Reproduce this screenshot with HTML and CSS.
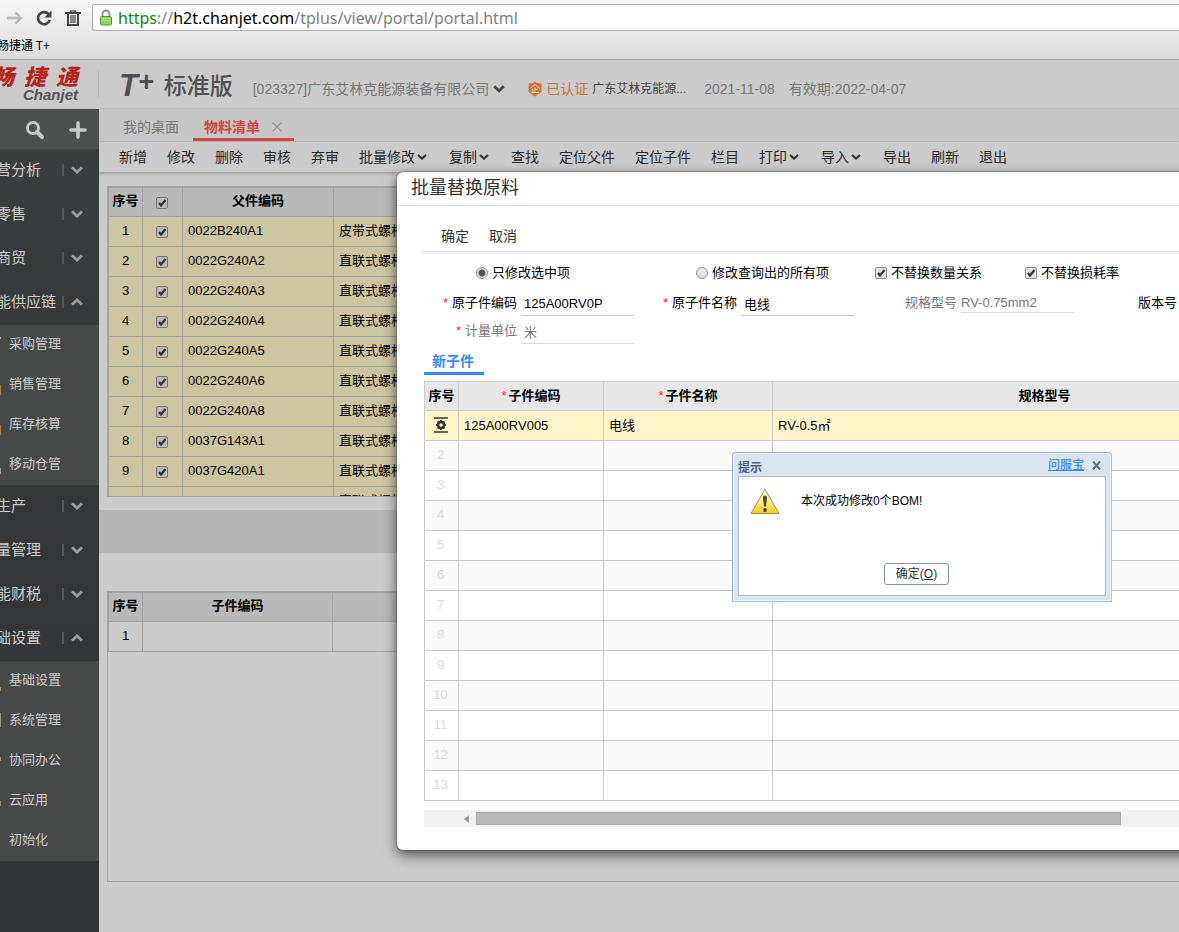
FILE: index.html
```
<!DOCTYPE html>
<html lang="zh-CN">
<head>
    <meta charset="utf-8">
    <title>畅捷通 T+</title>
    <link rel="stylesheet" href="styles.css">
</head>
<body>
    <!-- Browser bar -->
    <div class="browser">
        <div class="browser-row">
            <button class="nav-btn" type="button" aria-label="前进">
                <svg width="16" height="16" viewBox="0 0 16 16" fill="none" stroke="#b9b9b9" stroke-width="2.4"><path d="M0 8h14M8.500 2.500l5.500 5.500-5.500 5.500"/></svg>
            </button>
            <button class="nav-btn" type="button" aria-label="刷新页面">
                <svg width="16" height="16" viewBox="0 0 16 16"><path d="M12.600 4.200A6 6 0 1 0 13.800 10" fill="none" stroke="#444" stroke-width="2.600"/><path d="M15.500 0.500v7H8.500z" fill="#444"/></svg>
            </button>
            <button class="nav-btn" type="button" aria-label="清除">
                <svg width="16" height="16" viewBox="0 0 16 16" fill="none" stroke="#444"><path d="M0 3h16M3 4v11h10V4" stroke-width="2"/><path d="M5.500 2V0.800h5V2M6 5v8M8 5v8M10 5v8" stroke-width="1.200"/></svg>
            </button>
            <div class="address">
                <svg width="12" height="17" viewBox="0 0 12 17"><path d="M2.500 9V5a3.500 3.500 0 0 1 7 0v4" fill="none" stroke="#8d8d8d" stroke-width="1.800"/><rect x="0.500" y="7.500" width="11" height="8.500" rx="1" fill="#8ed160" stroke="#55a030"/><path d="M2 9.500h8M2 11.500h8" stroke="#b8e698"/></svg>
                <span class="url"><span class="scheme">https</span>://<span class="host">h2t.chanjet.com</span>/tplus/view/portal/portal.html</span>
            </div>
        </div>
        <div class="bookmarks"><a href="#">畅捷通 T+</a></div>
    </div>

    <!-- Product header -->
    <header class="top">
        <div class="logo">
            <div class="logo-cn"><span>畅</span><span>捷</span><span>通</span></div>
            <div class="logo-en">Chanjet</div>
        </div>
        <div class="product"><span class="product-t">T</span><span class="product-plus">+</span><span class="product-name">标准版</span></div>
        <button class="company" type="button">[023327]广东艾林克能源装备有限公司
            <svg width="12" height="8" viewBox="0 0 12 8" fill="none" stroke="#444" stroke-width="2.800"><path d="M1.200 1.200L6 5.800l4.800-4.600"/></svg>
        </button>
        <div class="verified">
            <svg width="14" height="16" viewBox="0 0 14 16"><path d="M7 0.500l2 1.500 4.500.5v8.500L7 15.500.5 11V2.500L5 2z" fill="#d77236"/><path d="M2.500 7L7 3.500 11.500 7M7 6.500v5M7 8.500h3M4.500 8v3.500M3 11.500h8" fill="none" stroke="#e5d2c5"/></svg>
            <span class="verified-tag">已认证</span>
            <span class="verified-name">广东艾林克能源...</span>
        </div>
        <span class="date">2021-11-08</span>
        <span class="expire">有效期:2022-04-07</span>
    </header>

    <div class="layout">
        <nav class="side">
            <div class="side-tools">
                <button type="button" aria-label="搜索"><svg width="20" height="20" viewBox="0 0 20 20" fill="none" stroke="#c8c8c8"><circle cx="8" cy="8" r="5.500" stroke-width="3"/><path d="M12 12l5 5" stroke-width="4" stroke-linecap="round"/></svg></button>
                <button type="button" aria-label="添加"><svg width="18" height="18" viewBox="0 0 18 18" stroke="#c8c8c8" stroke-width="3.600" stroke-linecap="round"><path d="M2 9h14M9 2v14"/></svg></button>
            </div>
            <a class="menu" href="#"><span>营分析</span><svg class="arrow" viewBox="0 0 12 8"><path d="M1 1.200l5 5 5-5"/></svg></a>
            <a class="menu" href="#"><span>零售</span><svg class="arrow" viewBox="0 0 12 8"><path d="M1 1.200l5 5 5-5"/></svg></a>
            <a class="menu" href="#"><span>商贸</span><svg class="arrow" viewBox="0 0 12 8"><path d="M1 1.200l5 5 5-5"/></svg></a>
            <a class="menu" href="#"><span>能供应链</span><svg class="arrow" viewBox="0 0 12 8"><path d="M1 6.800l5-5 5 5"/></svg></a>
            <div class="submenu">
                <a href="#"><svg width="2" height="24"><path d="M0 5h1v2h-1z" fill="#999"/></svg>采购管理</a>
                <a href="#"><svg width="2" height="24"><path d="M0 13h1v10h-1z" fill="#a07840"/></svg>销售管理</a>
                <a href="#"><svg width="2" height="24"><path d="M0 13h1v10h-1z" fill="#a07840"/></svg>库存核算</a>
                <a href="#"><svg width="2" height="24"><path d="M0 16h1v6h-1z" fill="#999"/></svg>移动仓管</a>
            </div>
            <a class="menu" href="#"><span>生产</span><svg class="arrow" viewBox="0 0 12 8"><path d="M1 1.200l5 5 5-5"/></svg></a>
            <a class="menu" href="#"><span>量管理</span><svg class="arrow" viewBox="0 0 12 8"><path d="M1 1.200l5 5 5-5"/></svg></a>
            <a class="menu" href="#"><span>能财税</span><svg class="arrow" viewBox="0 0 12 8"><path d="M1 1.200l5 5 5-5"/></svg></a>
            <a class="menu" href="#"><span>础设置</span><svg class="arrow" viewBox="0 0 12 8"><path d="M1 6.800l5-5 5 5"/></svg></a>
            <div class="submenu">
                <a href="#"><svg width="2" height="24"><path d="M0 19h1v4h-1z" fill="#a98a5c"/></svg>基础设置</a>
                <a href="#"><svg width="2" height="24"><path d="M0 5h1v14h-1z" fill="#a5967c"/></svg>系统管理</a>
                <a href="#"><svg width="2" height="24"><path d="M0 9h1v4h-1z" fill="#a98a5c"/></svg>协同办公</a>
                <a href="#"><svg width="2" height="24"><path d="M0 13h1v5h-1z" fill="#a98a5c"/></svg>云应用</a>
                <a href="#"><svg width="2" height="24"></svg>初始化</a>
            </div>
        </nav>

        <main class="main">
            <div class="tabs">
                <a class="tab" href="#">我的桌面</a>
                <a class="tab active" href="#">物料清单
                    <svg width="10" height="10" viewBox="0 0 10 10" stroke="#999" stroke-width="1.300"><path d="M0.500 0.500l9 9M9.500 0.500l-9 9"/></svg>
                </a>
            </div>
            <div class="toolbar">
                <button type="button">新增</button>
                <button type="button">修改</button>
                <button type="button">删除</button>
                <button type="button">审核</button>
                <button type="button">弃审</button>
                <button type="button">批量修改<svg class="caret" viewBox="0 0 10 6"><path d="M1 1l4 3.500L9 1"/></svg></button>
                <button type="button">复制<svg class="caret" viewBox="0 0 10 6"><path d="M1 1l4 3.500L9 1"/></svg></button>
                <button type="button">查找</button>
                <button type="button">定位父件</button>
                <button type="button">定位子件</button>
                <button type="button">栏目</button>
                <button type="button">打印<svg class="caret" viewBox="0 0 10 6"><path d="M1 1l4 3.500L9 1"/></svg></button>
                <button type="button">导入<svg class="caret" viewBox="0 0 10 6"><path d="M1 1l4 3.500L9 1"/></svg></button>
                <button type="button">导出</button>
                <button type="button">刷新</button>
                <button type="button">退出</button>
            </div>

            <!-- Parent items -->
            <div class="grid-box parents">
                <table class="grid">
                    <thead>
                        <tr><th class="c-no">序号</th><th class="c-check"><input type="checkbox" checked aria-label="全选"></th><th class="c-code">父件编码</th><th></th></tr>
                    </thead>
                    <tbody>
                        <tr><td>1</td><td><input type="checkbox" checked aria-label="选择第1行"></td><td>0022B240A1</td><td>皮带式螺杆</td></tr>
                        <tr><td>2</td><td><input type="checkbox" checked aria-label="选择第2行"></td><td>0022G240A2</td><td>直联式螺杆</td></tr>
                        <tr><td>3</td><td><input type="checkbox" checked aria-label="选择第3行"></td><td>0022G240A3</td><td>直联式螺杆</td></tr>
                        <tr><td>4</td><td><input type="checkbox" checked aria-label="选择第4行"></td><td>0022G240A4</td><td>直联式螺杆</td></tr>
                        <tr><td>5</td><td><input type="checkbox" checked aria-label="选择第5行"></td><td>0022G240A5</td><td>直联式螺杆</td></tr>
                        <tr><td>6</td><td><input type="checkbox" checked aria-label="选择第6行"></td><td>0022G240A6</td><td>直联式螺杆</td></tr>
                        <tr><td>7</td><td><input type="checkbox" checked aria-label="选择第7行"></td><td>0022G240A8</td><td>直联式螺杆</td></tr>
                        <tr><td>8</td><td><input type="checkbox" checked aria-label="选择第8行"></td><td>0037G143A1</td><td>直联式螺杆</td></tr>
                        <tr><td>9</td><td><input type="checkbox" checked aria-label="选择第9行"></td><td>0037G420A1</td><td>直联式螺杆</td></tr>
                        <tr><td></td><td><input type="checkbox" checked aria-label="选择第10行"></td><td>0037G420A2</td><td>直联式螺杆</td></tr>
                    </tbody>
                </table>
            </div>
            <div class="splitter"></div>

            <!-- Child items -->
            <div class="grid-box children">
                <table class="grid">
                    <thead>
                        <tr><th class="c-no">序号</th><th class="c-child">子件编码</th><th></th></tr>
                    </thead>
                    <tbody>
                        <tr><td>1</td><td></td><td></td></tr>
                    </tbody>
                </table>
            </div>

            <!-- Batch replace window -->
            <section class="modal">
                <h2 class="modal-title">批量替换原料</h2>
                <div class="modal-tools">
                    <button type="button">确定</button>
                    <button type="button">取消</button>
                </div>
                <div class="options">
                    <label><input type="radio" name="scope" checked>只修改选中项</label>
                    <label><input type="radio" name="scope">修改查询出的所有项</label>
                    <label><input type="checkbox" checked>不替换数量关系</label>
                    <label><input type="checkbox" checked>不替换损耗率</label>
                </div>
                <div class="fields">
                    <div class="field"><label for="oldCode"><i>*</i>原子件编码</label><input type="text" id="oldCode" value="125A00RV0P"></div>
                    <div class="field"><label for="oldName"><i>*</i>原子件名称</label><input type="text" id="oldName" value="电线"></div>
                    <div class="field readonly short"><label for="spec">规格型号</label><input type="text" id="spec" value="RV-0.75mm2" readonly></div>
                    <div class="field"><label for="version">版本号</label><input type="text" id="version"></div>
                    <div class="field readonly"><label for="unit"><i>*</i>计量单位</label><input type="text" id="unit" value="米" readonly></div>
                </div>
                <div class="modal-tabs"><a class="modal-tab" href="#">新子件</a></div>
                <div class="items-box">
                    <table class="items">
                        <thead>
                            <tr><th class="i-no">序号</th><th class="i-code"><i>*</i>子件编码</th><th class="i-name"><i>*</i>子件名称</th><th class="i-spec">规格型号</th></tr>
                        </thead>
                        <tbody>
                            <tr class="current">
                                <td><svg width="14" height="16" viewBox="0 0 14 16"><path d="M0 1h14M0 15h14" stroke="#333" stroke-width="1.600"/><circle cx="7" cy="8" r="3" fill="none" stroke="#333" stroke-width="2.400"/><path d="M7 3v2M7 11v2M2 8h2M10 8h2M3.500 4.500l1.400 1.400M9.100 10.100l1.400 1.400M10.500 4.500L9.100 5.900M4.900 10.100l-1.400 1.400" stroke="#333" stroke-width="1.800"/></svg></td>
                                <td>125A00RV005</td><td>电线</td><td>RV-0.5㎡</td>
                            </tr>
                            <tr><td>2</td><td></td><td></td><td></td></tr>
                            <tr><td>3</td><td></td><td></td><td></td></tr>
                            <tr><td>4</td><td></td><td></td><td></td></tr>
                            <tr><td>5</td><td></td><td></td><td></td></tr>
                            <tr><td>6</td><td></td><td></td><td></td></tr>
                            <tr><td>7</td><td></td><td></td><td></td></tr>
                            <tr><td>8</td><td></td><td></td><td></td></tr>
                            <tr><td>9</td><td></td><td></td><td></td></tr>
                            <tr><td>10</td><td></td><td></td><td></td></tr>
                            <tr><td>11</td><td></td><td></td><td></td></tr>
                            <tr><td>12</td><td></td><td></td><td></td></tr>
                            <tr><td>13</td><td></td><td></td><td></td></tr>
                        </tbody>
                    </table>
                </div>
                <div class="scrollbar">
                    <svg width="5" height="8" viewBox="0 0 5 8"><path d="M5 0v8L0 4z" fill="#999"/></svg>
                    <div class="thumb"></div>
                </div>
            </section>

            <!-- Message dialog -->
            <div class="dialog" role="alertdialog" aria-label="提示">
                <div class="dialog-head">
                    <span class="dialog-title">提示</span>
                    <a href="#">问服宝</a>
                    <button class="dialog-close" type="button" aria-label="关闭"><svg width="9" height="9" viewBox="0 0 9 9" stroke="#666d75" stroke-width="2"><path d="M1 0.500l7 8M8 0.500l-7 8"/></svg></button>
                </div>
                <div class="dialog-body">
                    <div class="message">
                        <svg width="30" height="27" viewBox="0 0 30 27">
                            <defs><linearGradient id="warn" x1="0" y1="0" x2="0" y2="1"><stop offset="0" stop-color="#fffbe6"/><stop offset="0.500" stop-color="#ffec80"/><stop offset="1" stop-color="#f7c81c"/></linearGradient></defs>
                            <path d="M15 1.200L29 25.500H1z" fill="url(#warn)" stroke="#b1895c" stroke-linejoin="round"/>
                            <path d="M13 9.500q0-2 2-2t2 2l-1 9h-2z" fill="#444"/><circle cx="15" cy="22" r="1.900" fill="#444"/>
                        </svg>
                        <p>本次成功修改0个BOM!</p>
                    </div>
                    <button class="ok" type="button">确定(<u>O</u>)</button>
                </div>
            </div>
        </main>
    </div>
</body>
</html>
```
FILE: styles.css
```
* { box-sizing: border-box; }

body {
    margin: 0;
    min-height: 100vh;
    display: flex;
    flex-direction: column;
    overflow: hidden;
    background: #cbcbcb;
    color: #000;
    font-family: "Liberation Sans", "Noto Sans CJK SC", sans-serif;
    font-size: 13px;
    line-height: 20px;
}

a { color: inherit; text-decoration: none; }
svg { display: block; flex: none; }

button {
    padding: 0;
    border: 0;
    background: none;
    color: inherit;
    font: inherit;
}

/* Browser bar */
.browser {
    height: 60px;
    background: linear-gradient(#f7f7f7, #dcdcdc);
    border-bottom: 1px solid #a6a6a6;
}

.browser-row {
    display: flex;
    align-items: center;
    gap: 13px;
    padding: 4px 0 0 7px;
}

.address {
    flex: 1;
    display: flex;
    align-items: center;
    gap: 6px;
    height: 27px;
    margin-left: -2px;
    padding-left: 7px;
    background: #fff;
    border: 1px solid #b0b0b0;
    border-right: 0;
    border-radius: 3px 0 0 3px;
}

.url { color: #808080; font: 16px/24px "Noto Sans", sans-serif; }
.scheme { color: #0b8a0b; }
.host { color: #000; }

.bookmarks {
    margin-left: -3px;
    padding-top: 4px;
    font: 12px/20px "Noto Sans CJK SC", sans-serif;
}

/* Product header */
.top {
    height: 49px;
    display: flex;
    align-items: center;
    border-bottom: 1px solid #c0c0c0;
    color: #777;
    font-size: 14px;
}

.logo {
    width: 99px;
    height: 26px;
    display: flex;
    flex-direction: column;
    justify-content: center;
    align-items: flex-end;
    padding: 2px 20px 0 0;
    border-right: 1px solid #b5b5b5;
}

.logo-cn {
    display: flex;
    gap: 10px;
    color: #b8221b;
    font-size: 22px;
    font-weight: 900;
    font-style: italic;
    line-height: 20px;
}

.logo-en {
    color: #555;
    font-size: 15px;
    font-weight: bold;
    font-style: italic;
    line-height: 14px;
}

.product {
    display: flex;
    align-items: center;
    margin-left: 20px;
    padding-top: 3px;
    color: #505050;
    line-height: 30px;
}

.product-t { font-size: 31px; font-weight: bold; font-style: italic; }
.product-plus { padding-bottom: 8px; font-size: 27px; font-weight: bold; font-style: italic; line-height: 22px; }
.product-name { margin-left: 10px; font-size: 23px; font-weight: 500; }

.company {
    display: flex;
    align-items: center;
    gap: 4px;
    margin: 9px 0 0 20px;
}

.verified {
    display: flex;
    align-items: center;
    gap: 4px;
    margin: 9px 0 0 23px;
}

.verified-tag { color: #d77236; }
.verified-name { color: #444; font-size: 12px; }
.date { margin: 9px 0 0 18px; }
.expire { margin: 9px 0 0 14px; }

.layout { flex: 1; display: flex; }

/* Side menu */
.side {
    width: 99px;
    flex: none;
    overflow: hidden;
    background: linear-gradient(#3b3f3f, #353738 40%, #323334);
    color: #ccc;
}

.side-tools {
    height: 40px;
    display: flex;
    align-items: center;
    justify-content: flex-end;
    gap: 24px;
    padding: 2px 12px 0 0;
    background: #4d504f;
}

.menu {
    height: 44px;
    display: flex;
    align-items: center;
    margin-left: -4px;
    padding: 0 16px 2px 0;
    font-size: 15px;
}

.menu span { flex: 1; white-space: nowrap; }

.arrow {
    width: 21px;
    height: 12px;
    padding: 2px 0 2px 7px;
    border-left: 2px solid #555858;
    fill: none;
    stroke: #999;
    stroke-width: 2.8;
}

.submenu { background: #474949; }

.submenu a {
    height: 40px;
    display: flex;
    align-items: center;
    gap: 7px;
    padding-bottom: 2px;
}

/* Work area */
.main {
    flex: 1;
    min-width: 0;
    position: relative;
    padding-bottom: 50px;
}

.tabs {
    height: 33px;
    display: flex;
    padding-left: 12px;
    background: #c6c6c6;
    border-bottom: 1px solid #b9bac4;
    color: #777;
    font-size: 14px;
}

.tab {
    height: 32px;
    display: flex;
    align-items: center;
    gap: 12px;
    padding: 4px 12px 0;
}

.tab.active {
    margin-left: 2px;
    padding: 7px 12px 0 11px;
    border-bottom: 3px solid #d14444;
    color: #d14444;
    font-weight: bold;
}

.toolbar {
    height: 30px;
    display: flex;
    align-items: center;
    gap: 20px;
    padding-left: 20px;
    box-shadow: 0 2px 3px rgba(0, 0, 0, 0.2);
    color: #292929;
    font-size: 14px;
}

.toolbar button { display: flex; align-items: center; white-space: nowrap; }

.caret {
    width: 14px;
    height: 6px;
    padding: 0 2px;
    fill: none;
    stroke: #333;
    stroke-width: 2.2;
}

.grid-box {
    margin-left: 8px;
    overflow: hidden;
    border: 1px solid #a3a3a3;
    border-right: 0;
}

.parents { height: 311px; margin-top: 14px; }
.children { height: 291px; margin-top: 38px; }

.splitter { height: 43px; margin-top: 13px; background: #b7b7b7; }

.grid, .items {
    width: 100%;
    table-layout: fixed;
    border-collapse: separate;
    border-spacing: 0;
}

.grid { border-top: 1px solid #a3a3a3; border-left: 1px solid #a3a3a3; }

.grid th, .grid td {
    height: 30px;
    padding: 0 5px 2px;
    border-right: 1px solid #a3a3a3;
    border-bottom: 1px solid #a3a3a3;
    text-align: left;
    white-space: nowrap;
}

.grid th { height: 29px; padding: 0 0 2px; background: #b9b9b9; text-align: center; }
.grid td:first-child { text-align: center; }
.parents td { background: #ccc5a1; }
.parents td:nth-child(2) { padding: 0 2px 1px 0; text-align: center; }
.parents th:nth-child(2) { padding: 0 2px 0 0; }
.c-no { width: 34px; }
.c-check { width: 40px; }
.c-code { width: 151px; }
.c-child { width: 190px; }

input[type="checkbox"], input[type="radio"] {
    appearance: none;
    width: 12px;
    height: 12px;
    margin: 0;
    border: 1px solid #8f8f8f;
    border-radius: 2px;
    background: linear-gradient(#eee, #ddd);
    vertical-align: middle;
}

input[type="checkbox"]:checked {
    background: #e3e3e3 url("data:image/svg+xml,%3Csvg xmlns='http://www.w3.org/2000/svg' viewBox='0 0 10 10'%3E%3Cpath d='M2 5l2 2.500L8.500 2' fill='none' stroke='%23333' stroke-width='2.200'/%3E%3C/svg%3E");
}

.grid input[type="checkbox"] { background-color: #b9b9b9; border-color: #777; }

input[type="radio"] { border-radius: 50%; }
input[type="radio"]:checked { background: radial-gradient(circle, #555 3px, #e8e8e8 4px); }

/* Batch replace window, runs on past the right edge */
.modal {
    position: absolute;
    top: 63px;
    left: 298px;
    right: -20px;
    padding-bottom: 23px;
    background: #fff;
    border-radius: 6px;
    box-shadow: 0 0 2px #333, 0 5px 14px rgba(0, 0, 0, 0.6);
}

.modal-title {
    margin: 0;
    padding: 0 14px 1px;
    border-bottom: 1px solid #e5e5e5;
    color: #333;
    font-size: 18px;
    font-weight: normal;
    line-height: 32px;
}

.modal-tools {
    height: 31px;
    display: flex;
    gap: 20px;
    margin: 15px 0 0 24px;
    padding-left: 20px;
    border-bottom: 1px solid #ddd;
    box-shadow: 0 2px 2px rgba(0, 0, 0, 0.05);
    color: #333;
    font-size: 14px;
}

.options {
    display: grid;
    grid-template-columns: 220px 179px 150px auto;
    margin: 10px 0 8px 79px;
    line-height: 22px;
}

.options label { display: flex; align-items: center; gap: 4px; white-space: nowrap; }

.fields {
    display: grid;
    grid-template-columns: repeat(4, 210px);
    gap: 4px 10px;
    margin-left: 27px;
    overflow: hidden;
}

.field { display: flex; gap: 4px; }

.field label {
    width: 93px;
    text-align: right;
    white-space: nowrap;
    line-height: 22px;
}

.field i, .items i { margin-right: 4px; color: #f23; font-style: normal; font-weight: normal; }
.items i { margin-right: 2px; }

.field input {
    width: 113px;
    height: 24px;
    padding: 0 3px;
    border: 0;
    border-bottom: 1px solid #ccc;
    background: none;
    font: inherit;
}

.field.readonly label, .field.readonly input { color: #777; }
.field.readonly input { border-color: #ddd; }
.field.short input { height: 21px; padding: 0; }

.modal-tabs { display: flex; margin: 6px 0 6px 27px; }

.modal-tab {
    padding: 0 10px 0 8px;
    border-bottom: 3px solid #3888ff;
    color: #3888ff;
    font-size: 14px;
    font-weight: bold;
    line-height: 22px;
}

.items-box { margin-left: 27px; overflow: hidden; }
.items { width: 893px; border-top: 1px solid #ccc; border-left: 1px solid #ccc; }

.items th, .items td {
    height: 30px;
    padding: 0 5px;
    border-right: 1px solid #ccc;
    border-bottom: 1px solid #ccc;
    text-align: left;
}

.items th { height: 29px; padding: 0; background: #e7e7e7; text-align: center; }
.items td:first-child { padding: 0 7px 2px 5px; color: #ddd; text-align: center; }
.items td svg { margin: 0 auto; }
.items tbody tr:nth-child(even) { background: #fafafa; }
.items .current { background: #fff5ca; }
.i-no { width: 34px; }
.i-code { width: 145px; }
.i-name { width: 169px; }
.i-spec { width: 544px; }

.scrollbar {
    height: 17px;
    display: flex;
    align-items: center;
    gap: 7px;
    margin: 9px 0 0 27px;
    padding-left: 40px;
    background: #f1f1f1;
}

.thumb {
    width: calc(100% - 90px);
    height: 13px;
    background: #bababa;
    border: 1px solid #a8a8a8;
}

/* Message dialog */
.dialog {
    position: absolute;
    top: 343px;
    left: 633px;
    width: 380px;
    padding: 0 5px 5px;
    background: #dae5f0;
    border: 1px solid #9db4c4;
    border-right-color: #8fd0e4;
    border-bottom-color: #8fd0e4;
    border-radius: 4px 4px 0 0;
    box-shadow: inset 0 0 0 1px #edf3f8;
    font-size: 12px;
}

.dialog-head {
    height: 23px;
    display: flex;
    align-items: center;
    gap: 8px;
    padding: 1px 5px 0 0;
}

.dialog-title { flex: 1; padding-top: 5px; color: #43638f; font-weight: bold; }
.dialog-head a { color: #3888ff; font-weight: 500; text-decoration: underline; }

.dialog-body {
    height: 120px;
    display: flex;
    flex-direction: column;
    align-items: center;
    justify-content: space-between;
    padding: 11px 22px 10px 11px;
    background: #fff;
    border: 1px solid #a9bccc;
}

.message { width: 100%; display: flex; gap: 21px; }
.message p { margin: 3px 0; }

.ok {
    width: 65px;
    height: 22px;
    background: #fff;
    border: 1px solid #8093a8;
    border-radius: 3px;
    color: #333;
}
```
